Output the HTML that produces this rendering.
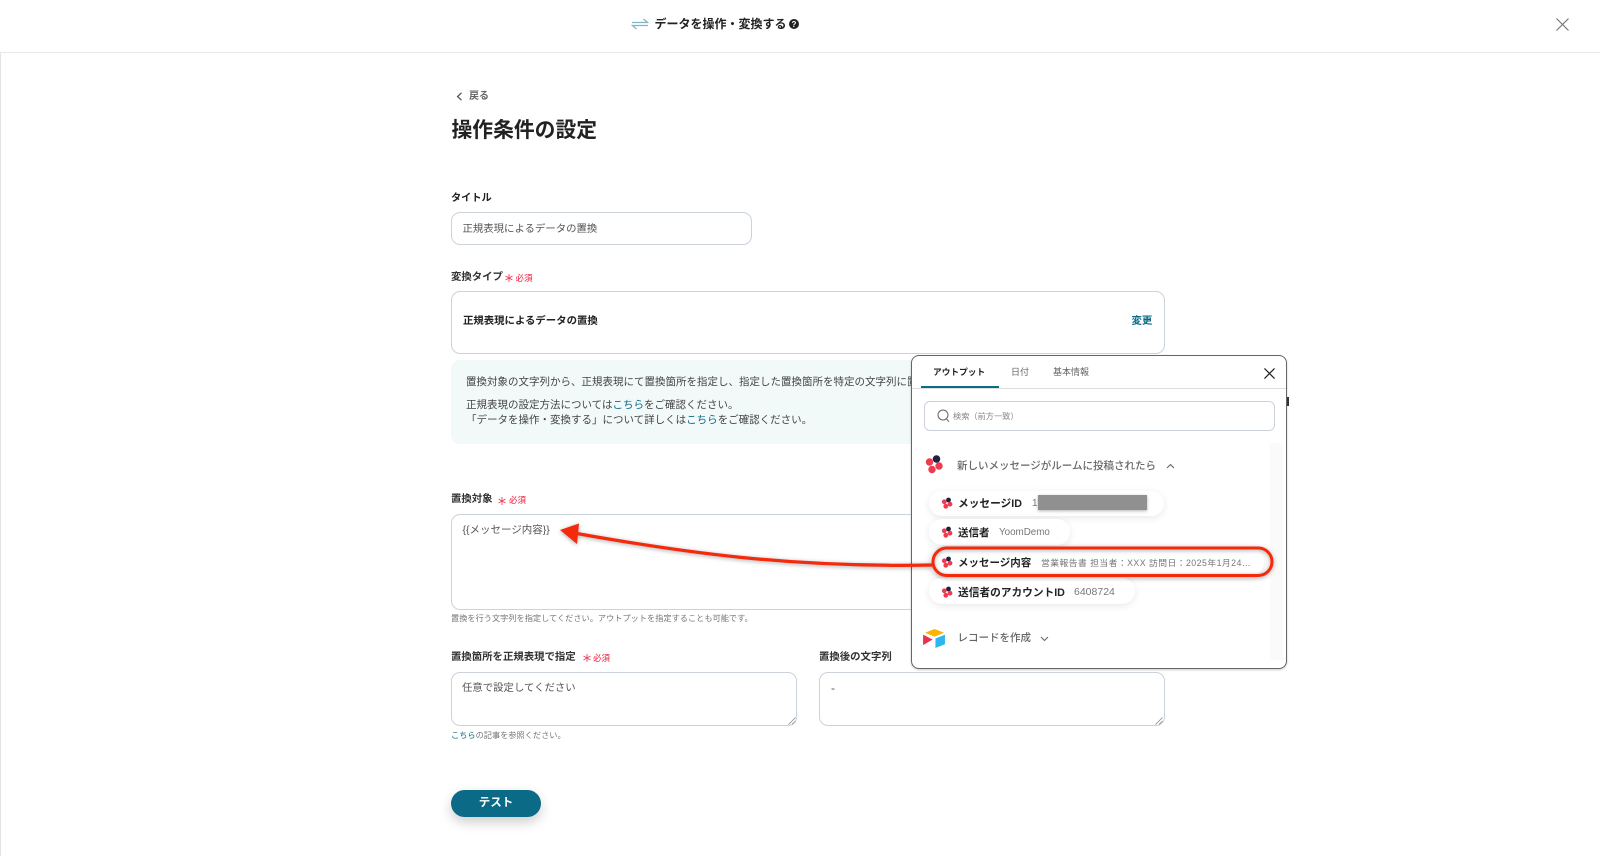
<!DOCTYPE html>
<html lang="ja"><head><meta charset="utf-8"><title>操作条件の設定</title>
<style>
html,body{margin:0;padding:0;background:#fff}
body{width:1600px;height:856px;position:relative;overflow:hidden;font-family:"Liberation Sans","Noto Sans CJK JP",sans-serif;color:#333}
.t{position:absolute;white-space:nowrap;line-height:20px;height:20px;font-size:10.4px;color:#444}
.b{font-weight:700;color:#222}
.req{color:#f0405a;font-size:8.5px;font-weight:500}
.box{position:absolute;box-sizing:border-box;background:#fff;border:1px solid #ccd2da;border-radius:9px}
.pill{position:absolute;background:#fff;border-radius:14px;box-shadow:0 2px 8px rgba(0,0,0,.09)}
.a{color:#0b6a85}
svg{position:absolute;overflow:visible}
.v{color:#777;font-size:8.6px}
.h{font-size:8.2px;color:#777}
</style></head><body>

<div style="position:absolute;left:0;top:52px;width:1600px;height:1px;background:#e8e8e8"></div>
<div style="position:absolute;left:0;top:52px;width:1px;height:804px;background:#e4e4e4"></div>

<svg style="left:631px;top:16px" width="18" height="16" viewBox="0 0 18 16" fill="none" stroke="#7fb6c6" stroke-width="1.3"><path d="M1 6.500H16.500L12.500 3"/><path d="M17 9.500H1.500L5.500 13"/></svg>
<div class="t b" style="left:654.500px;top:14px;font-size:12px">データを操作・変換する</div>
<svg style="left:789px;top:19px" width="10" height="10" viewBox="0 0 10 10"><circle cx="5" cy="5" r="5" fill="#222"/><text x="5" y="8" text-anchor="middle" font-size="8" font-weight="700" fill="#fff" font-family="Liberation Sans">?</text></svg>
<svg style="left:1555.500px;top:18px" width="13" height="13" viewBox="0 0 13 13" stroke="#777" stroke-width="1.200"><path d="M.5.5L12.500 12.500M12.500.5L.5 12.500"/></svg>

<svg style="left:456px;top:91.500px" width="7" height="9" viewBox="0 0 7 9" fill="none" stroke="#555" stroke-width="1.300"><path d="M5.500.8L1.600 4.500L5.500 8.200"/></svg>
<div class="t" style="left:469px;top:86.500px;font-size:10px;color:#666;font-weight:700">戻る</div>
<div class="t b" style="left:451.500px;top:120.500px;font-size:20.800px">操作条件の設定</div>

<div class="t b" style="left:451px;top:188.500px;font-size:10.200px">タイトル</div>
<div class="box" style="left:451px;top:212px;width:300.500px;height:33px"></div>
<div class="t" style="left:462.500px;top:219.500px;color:#555">正規表現によるデータの置換</div>

<div class="t b" style="left:451px;top:267.500px;color:#333">変換タイプ</div>
<svg style="left:505px;top:274px" width="8" height="8" viewBox="0 0 8 8" stroke="#f0405a" stroke-width=".9"><path d="M4 0V8M.5 2L7.500 6M.5 6L7.500 2"/></svg>
<div class="t req" style="left:515.500px;top:268px">必須</div>
<div class="box" style="left:451px;top:291px;width:713.500px;height:63px"></div>
<div class="t b" style="left:463px;top:312px">正規表現によるデータの置換</div>
<div class="t a" style="left:1131.500px;top:312px;font-weight:700">変更</div>

<div style="position:absolute;left:451px;top:360px;width:713px;height:83.500px;background:#f2f9f9;border-radius:9px"></div>
<div class="t" style="left:466px;top:372px;color:#444;font-size:10.500px">置換対象の文字列から、正規表現にて置換箇所を指定し、指定した置換箇所を特定の文字列に置換します。</div>
<div class="t" style="left:466px;top:395px;font-size:10.500px">正規表現の設定方法については<span class="a">こちら</span>をご確認ください。</div>
<div class="t" style="left:466px;top:410px;font-size:10.500px">「データを操作・変換する」について詳しくは<span class="a">こちら</span>をご確認ください。</div>

<div class="t b" style="left:451px;top:489.500px;color:#333">置換対象</div>
<svg style="left:498px;top:496.500px" width="8" height="8" viewBox="0 0 8 8" stroke="#f0405a" stroke-width=".9"><path d="M4 0V8M.5 2L7.500 6M.5 6L7.500 2"/></svg>
<div class="t req" style="left:509px;top:490px">必須</div>
<div class="box" style="left:451px;top:514px;width:713.500px;height:95.500px"></div>
<div class="t" style="left:462.500px;top:519.500px;color:#555;font-size:10.500px">{{メッセージ内容}}</div>
<div class="t h" style="left:451px;top:608.500px">置換を行う文字列を指定してください。アウトプットを指定することも可能です。</div>

<div class="t b" style="left:451px;top:647.500px;color:#333">置換箇所を正規表現で指定</div>
<svg style="left:583px;top:654px" width="8" height="8" viewBox="0 0 8 8" stroke="#f0405a" stroke-width=".9"><path d="M4 0V8M.5 2L7.500 6M.5 6L7.500 2"/></svg>
<div class="t req" style="left:593px;top:647.500px">必須</div>
<div class="box" style="left:451px;top:672px;width:345.500px;height:54px"></div>
<div class="t" style="left:462px;top:678.500px;color:#555;font-size:10.400px">任意で設定してください</div>
<svg style="left:788px;top:717px" width="8" height="8" viewBox="0 0 8 8" stroke="#888" stroke-width=".8"><path d="M.5 7.500L7.500.5M4 7.500L7.500 4"/></svg>
<div class="t h" style="left:451px;top:726px"><span class="a">こちら</span>の記事を参照ください。</div>

<div class="t b" style="left:819px;top:647.500px;color:#333">置換後の文字列</div>
<div class="box" style="left:819px;top:672px;width:345.500px;height:54px"></div>
<div class="t" style="left:831px;top:677.500px;color:#555;font-size:12px">-</div>
<svg style="left:1155px;top:717px" width="8" height="8" viewBox="0 0 8 8" stroke="#888" stroke-width=".8"><path d="M.5 7.500L7.500.5M4 7.500L7.500 4"/></svg>

<div style="position:absolute;left:451px;top:789.500px;width:90px;height:27px;border-radius:14px;background:#0b6a85;box-shadow:0 5px 12px rgba(0,0,0,.2)"></div>
<div class="t" style="left:451px;top:793px;width:90px;text-align:center;color:#fff;font-size:11.500px;font-weight:700">テスト</div>

<!-- popup -->
<div style="position:absolute;left:911px;top:355px;width:376px;height:314px;box-sizing:border-box;background:#fff;border:1px solid #666;border-radius:8px;box-shadow:0 1px 2px rgba(0,0,0,.2)"></div>
<div style="position:absolute;left:1287px;top:397px;width:2px;height:9px;background:#333"></div>
<div class="t b" style="left:933px;top:362px;font-size:8.700px">アウトプット</div>
<div class="t" style="left:1011px;top:362px;font-size:9px;color:#666">日付</div>
<div class="t" style="left:1053px;top:362px;font-size:9px;color:#666">基本情報</div>
<div style="position:absolute;left:912px;top:388px;width:374px;height:1px;background:#ddd"></div>
<div style="position:absolute;left:921px;top:386px;width:78px;height:2px;background:#0b6a85"></div>
<svg style="left:1263.500px;top:368px" width="11" height="11" viewBox="0 0 12 12" stroke="#222" stroke-width="1.300"><path d="M.5.5L11.500 11.500M11.500.5L.5 11.500"/></svg>

<div class="box" style="left:923.500px;top:401px;width:351.500px;height:30px;border-radius:6px"></div>
<svg style="left:937px;top:409px" width="13" height="14" viewBox="0 0 13 14" fill="none" stroke="#666" stroke-width="1"><circle cx="6" cy="6" r="5"/><path d="M9.500 9.800L12 12.800"/></svg>
<div class="t" style="left:953px;top:406.500px;font-size:8.200px;color:#888">検索（前方一致）</div>

<div style="position:absolute;left:1270px;top:443px;width:13px;height:217px;background:#fafafa"></div>

<svg style="left:924px;top:454px" width="20" height="20" viewBox="0 0 20 20"><circle cx="12.500" cy="5" r="3.800" fill="#1c2340"/><circle cx="5.500" cy="8" r="3.700" fill="#ef3b50"/><circle cx="15" cy="12" r="3.700" fill="#ef3b50"/><circle cx="8" cy="15.500" r="3.700" fill="#ef3b50"/></svg>
<div class="t" style="left:957px;top:455.500px;color:#666;font-size:10.500px;font-weight:500">新しいメッセージがルームに投稿されたら</div>
<svg style="left:1166px;top:463px" width="9" height="6" viewBox="0 0 9 6" fill="none" stroke="#666" stroke-width="1.100"><path d="M1 5L4.500 1.500L8 5"/></svg>

<div class="pill" style="left:929px;top:491px;width:235px;height:25px"></div>
<div class="pill" style="left:929px;top:519px;width:141px;height:26px"></div>
<div class="pill" style="left:929px;top:548px;width:335px;height:28px"></div>
<div class="pill" style="left:929px;top:578px;width:206px;height:26px"></div>

<svg style="left:941px;top:497px" width="12" height="12" viewBox="0 0 20 20"><circle cx="12.500" cy="5" r="4" fill="#1c2340"/><circle cx="5.500" cy="8" r="4" fill="#ef3b50"/><circle cx="15" cy="12" r="4" fill="#ef3b50"/><circle cx="8" cy="15.500" r="4" fill="#ef3b50"/></svg>
<div class="t b" style="left:958px;top:493.500px;font-size:10.700px">メッセージID</div>
<div class="t v" style="left:1032px;top:493.500px;font-size:10px">1</div>
<div style="position:absolute;left:1038px;top:495px;width:109px;height:15px;background:#909090;box-shadow:0 1px 3px rgba(0,0,0,.3)"></div>

<svg style="left:941px;top:526px" width="12" height="12" viewBox="0 0 20 20"><circle cx="12.500" cy="5" r="4" fill="#1c2340"/><circle cx="5.500" cy="8" r="4" fill="#ef3b50"/><circle cx="15" cy="12" r="4" fill="#ef3b50"/><circle cx="8" cy="15.500" r="4" fill="#ef3b50"/></svg>
<div class="t b" style="left:958px;top:522.500px;font-size:10.500px">送信者</div>
<div class="t v" style="left:999px;top:522.500px;font-size:9.800px">YoomDemo</div>

<svg style="left:941px;top:556px" width="12" height="12" viewBox="0 0 20 20"><circle cx="12.500" cy="5" r="4" fill="#1c2340"/><circle cx="5.500" cy="8" r="4" fill="#ef3b50"/><circle cx="15" cy="12" r="4" fill="#ef3b50"/><circle cx="8" cy="15.500" r="4" fill="#ef3b50"/></svg>
<div class="t b" style="left:958px;top:552.500px;font-size:10.500px">メッセージ内容</div>
<div class="t v" style="left:1041px;top:552.500px;font-size:8.800px;letter-spacing:.45px">営業報告書 担当者：XXX 訪問日：2025年1月24…</div>

<svg style="left:941px;top:586px" width="12" height="12" viewBox="0 0 20 20"><circle cx="12.500" cy="5" r="4" fill="#1c2340"/><circle cx="5.500" cy="8" r="4" fill="#ef3b50"/><circle cx="15" cy="12" r="4" fill="#ef3b50"/><circle cx="8" cy="15.500" r="4" fill="#ef3b50"/></svg>
<div class="t b" style="left:958px;top:582.500px;font-size:10.700px">送信者のアカウントID</div>
<div class="t v" style="left:1074px;top:582px;font-size:10.500px">6408724</div>

<svg style="left:923px;top:629px" width="23" height="19" viewBox="0 0 24 20"><path d="M12 0L22 4L12 8L2 4Z" fill="#fcb400"/><path d="M13 10L23 6V16L13 20Z" fill="#2db6f0"/><path d="M0 6L10 11L0 17Z" fill="#e8304f"/></svg>
<div class="t" style="left:957.500px;top:628px;color:#666;font-size:10.500px;font-weight:500">レコードを作成</div>
<svg style="left:1040px;top:636px" width="9" height="6" viewBox="0 0 9 6" fill="none" stroke="#666" stroke-width="1.100"><path d="M1 1L4.500 4.500L8 1"/></svg>

<!-- annotation -->
<svg style="left:0;top:0;filter:drop-shadow(0 1px 2px rgba(0,0,0,.35))" width="1600" height="856" viewBox="0 0 1600 856" fill="none">
<rect x="933" y="548" width="339" height="27.500" rx="13.700" stroke="#f42a0c" stroke-width="3"/>
<path d="M574 533C680 552 790 568 933 565" stroke="#f42a0c" stroke-width="3.200"/>
<path d="M560 530L579 523.500L577 544Z" fill="#f42a0c"/>
</svg>

</body></html>
